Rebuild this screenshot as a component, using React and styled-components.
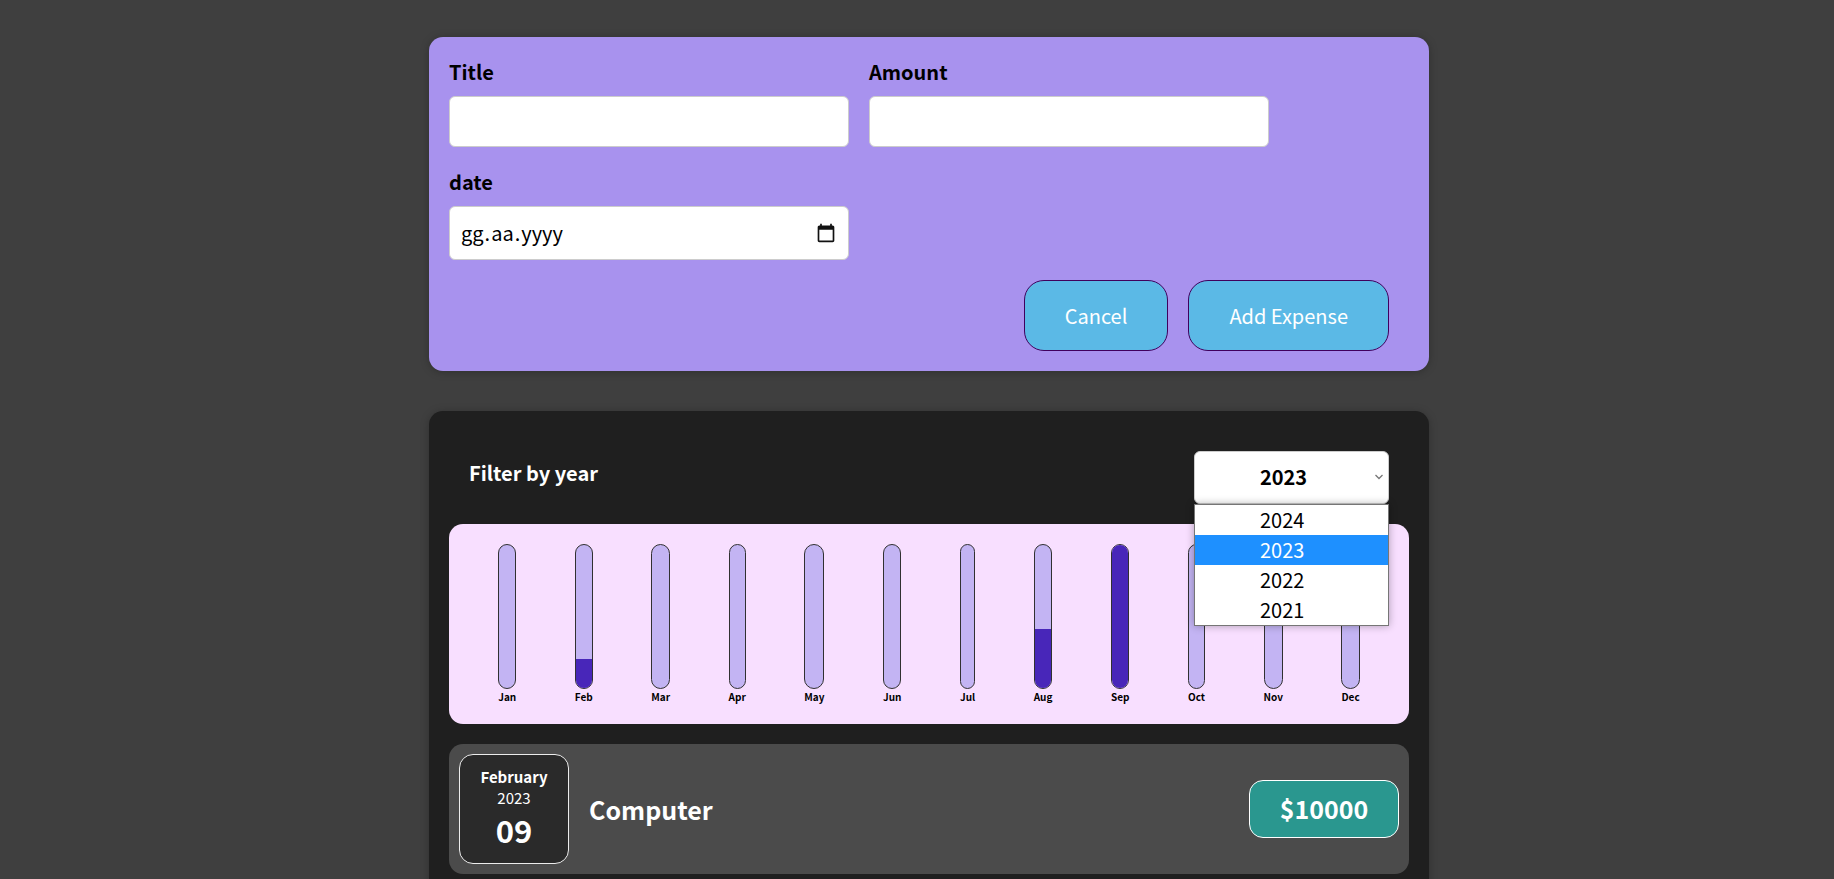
import React from "react";
import styled, { createGlobalStyle } from "styled-components";

const GlobalStyle = createGlobalStyle`
  * { box-sizing: border-box; }
  html, body { margin: 0; background: #3f3f3f; overflow: hidden; }
  body { font-family: "Noto Sans CJK JP", "Noto Sans", sans-serif; }
`;

const Page = styled.div`
  padding: 37px 0 40px 24px;
`;
const Card = styled.div`
  width: 1000px;
  margin: 0 auto 40px;
  padding: 20px;
  border-radius: 14px;
  box-shadow: 0 1px 8px rgba(0, 0, 0, 0.25);
`;
const FormCard = styled(Card)`
  background: #a892ee;
`;
const ExpensesCard = styled(Card)`
  background: #1f1f1f;
`;
const Fields = styled.div`
  display: flex;
  flex-wrap: wrap;
  gap: 20px;
  margin-bottom: 20px;
`;
const Field = styled.div`
  width: 400px;
`;
const Label = styled.label`
  display: block;
  margin-bottom: 10px;
  color: #000;
  font-size: 20px;
  font-weight: 700;
  line-height: 29px;
`;
const Input = styled.input`
  display: block;
  width: 100%;
  height: 51px;
  padding: 10px;
  border: 1px solid #ccc;
  border-radius: 6px;
  background: #fff;
  font: inherit;
  font-size: 20px;
`;
const DateField = styled.div`
  display: flex;
  align-items: center;
  height: 54px;
  padding: 0 12px 0 10px;
  border: 1px solid #ccc;
  border-radius: 6px;
  background: #fff;
`;
const DateText = styled.div`
  flex: 1;
  padding-bottom: 2px;
  color: #000;
  font-size: 20px;
`;
const DateSegment = styled.span`
  padding: 0 1px;
`;
const Actions = styled.div`
  display: flex;
  justify-content: flex-end;
  gap: 20px;
  padding-right: 20px;
`;
const Button = styled.button`
  padding: 20px 40px;
  border: 1px solid #40005d;
  border-radius: 20px;
  background: #5bb9e6;
  color: #fff;
  font: inherit;
  font-size: 20px;
  line-height: 29px;
`;
const Filter = styled.div`
  position: relative;
  display: flex;
  justify-content: space-between;
  align-items: center;
  padding: 20px;
`;
const FilterLabel = styled.label`
  color: #fff;
  font-size: 20px;
  font-weight: 700;
  margin-bottom: 10px;
`;
const SelectWrap = styled.div`
  position: relative;
  width: 195px;
  height: 53px;
`;
const YearSelect = styled.select`
  display: block;
  width: 100%;
  height: 100%;
  padding: 0 26px 2px 10px;
  appearance: none;
  border: 1px solid #ccc;
  border-radius: 6px;
  background: #fff;
  color: #000;
  font: inherit;
  font-size: 20px;
  font-weight: 700;
  text-align: center;
`;
const Chevron = styled.svg`
  position: absolute;
  top: 22px;
  right: 5px;
  pointer-events: none;
`;
const Menu = styled.div`
  position: absolute;
  top: 73px;
  right: 20px;
  z-index: 2;
  width: 195px;
  border: 1px solid #767676;
  background: #fff;
  box-shadow: 0 0 8px rgba(0, 0, 0, 0.3);
`;
const MenuItem = styled.div`
  height: 30px;
  padding-left: 65px;
  background: ${(p) => (p.$active ? "#1e90ff" : "#fff")};
  color: ${(p) => (p.$active ? "#fff" : "#000")};
  font-size: 20px;
  line-height: 30px;
`;
const Chart = styled.div`
  display: flex;
  justify-content: space-around;
  height: 200px;
  margin-bottom: 20px;
  padding: 20px;
  border-radius: 14px;
  background: #f8dfff;
`;
const BarColumn = styled.div`
  display: flex;
  flex-direction: column;
  align-items: stretch;
  height: 100%;
`;
const BarTrack = styled.div`
  flex: 1;
  display: flex;
  flex-direction: column;
  justify-content: flex-end;
  overflow: hidden;
  border: 1px solid #313131;
  border-radius: 12px;
  background: #c3b4f3;
`;
const BarFill = styled.div`
  background: #4826b9;
`;
const BarLabel = styled.div`
  color: #000;
  font-size: 10px;
  font-weight: 700;
  line-height: 15px;
  text-align: center;
`;
const Item = styled.div`
  display: flex;
  align-items: center;
  height: 130px;
  padding: 10px;
  border-radius: 14px;
  background: #4b4b4b;
`;
const DateBox = styled.div`
  display: flex;
  flex-direction: column;
  align-items: center;
  justify-content: center;
  width: 110px;
  height: 110px;
  padding-bottom: 1px;
  border: 1px solid #ececec;
  border-radius: 14px;
  background: #2a2a2a;
  color: #fff;
`;
const DateMonth = styled.div`
  font-size: 15px;
  font-weight: 700;
  line-height: 22px;
`;
const DateYear = styled.div`
  font-size: 15px;
  line-height: 19px;
`;
const DateDay = styled.div`
  font-size: 31px;
  font-weight: 700;
  line-height: 45px;
`;
const ItemTitle = styled.h2`
  flex: 1;
  margin: 0 0 0 20px;
  color: #fff;
  font-size: 25px;
  font-weight: 700;
`;
const Price = styled.div`
  width: 150px;
  height: 58px;
  border: 1px solid #fff;
  border-radius: 14px;
  background: #2a978f;
  color: #fff;
  font-size: 25px;
  font-weight: 700;
  line-height: 54px;
  text-align: center;
`;

const months = [
  ["Jan", 0], ["Feb", 20], ["Mar", 0], ["Apr", 0], ["May", 0], ["Jun", 0],
  ["Jul", 0], ["Aug", 41], ["Sep", 100], ["Oct", 0], ["Nov", 0], ["Dec", 0],
];
const years = ["2024", "2023", "2022", "2021"];

function CalendarIcon() {
  return (
    <svg width="20" height="20" viewBox="0 0 24 24" fill="#111">
      <path d="M20 3h-1V1h-2v2H7V1H5v2H4c-1.1 0-2 .9-2 2v16c0 1.1.9 2 2 2h16c1.1 0 2-.9 2-2V5c0-1.1-.9-2-2-2zm0 18H4V8h16v13z" />
    </svg>
  );
}

export default function App() {
  return (
    <Page>
      <GlobalStyle />
      <FormCard>
        <Fields>
          <Field>
            <Label>Title</Label>
            <Input type="text" />
          </Field>
          <Field>
            <Label>Amount</Label>
            <Input type="text" />
          </Field>
          <Field>
            <Label>date</Label>
            <DateField>
              <DateText>
                <DateSegment>gg</DateSegment>.<DateSegment>aa</DateSegment>.<DateSegment>yyyy</DateSegment>
              </DateText>
              <CalendarIcon />
            </DateField>
          </Field>
        </Fields>
        <Actions>
          <Button>Cancel</Button>
          <Button>Add Expense</Button>
        </Actions>
      </FormCard>

      <ExpensesCard>
        <Filter>
          <FilterLabel>Filter by year</FilterLabel>
          <SelectWrap>
            <YearSelect defaultValue="2023">
              {years.map((y) => (
                <option key={y} value={y}>{y}</option>
              ))}
            </YearSelect>
            <Chevron width="10" height="8" viewBox="0 0 10 8" fill="none" stroke="#777" strokeWidth="1.3">
              <path d="M1.5 2l3.5 3.5L8.500 2" />
            </Chevron>
          </SelectWrap>
          <Menu>
            {years.map((y) => (
              <MenuItem key={y} $active={y === "2023"}>{y}</MenuItem>
            ))}
          </Menu>
        </Filter>
        <Chart>
          {months.map(([name, pct]) => (
            <BarColumn key={name}>
              <BarTrack>
                <BarFill style={{ height: pct + "%" }} />
              </BarTrack>
              <BarLabel>{name}</BarLabel>
            </BarColumn>
          ))}
        </Chart>
        <Item>
          <DateBox>
            <DateMonth>February</DateMonth>
            <DateYear>2023</DateYear>
            <DateDay>09</DateDay>
          </DateBox>
          <ItemTitle>Computer</ItemTitle>
          <Price>$10000</Price>
        </Item>
      </ExpensesCard>
    </Page>
  );
}
